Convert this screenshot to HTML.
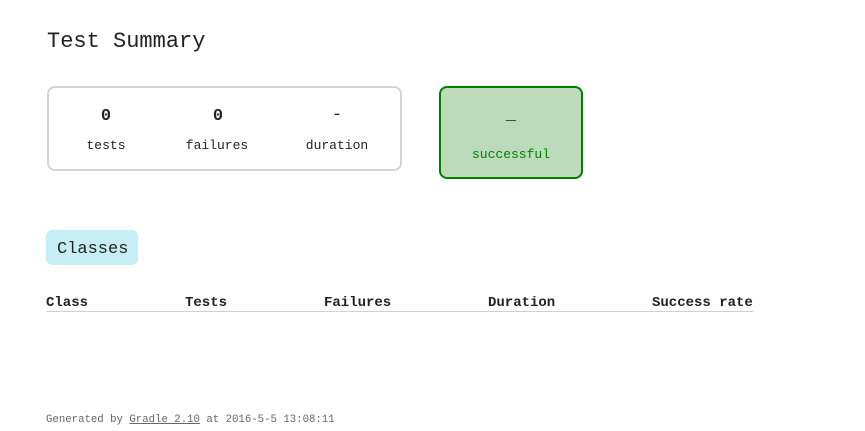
<!DOCTYPE html>
<html><head><style>
body{margin:0;width:865px;height:431px;background:#fff;font-family:"Liberation Mono","Noto Sans CJK SC",monospace;color:#222;position:relative;overflow:hidden}
.a{position:absolute;white-space:nowrap}
.c{text-align:center}
</style></head><body>
<div class="a" style="left:47px;top:28px;font-size:22px;line-height:28px;">Test Summary</div>
<div class="a" style="left:47px;top:86px;width:351px;height:81px;border:2px solid #d4d4d4;border-radius:8px;"></div>
<div class="a c" style="left:76px;top:107px;width:60px;font-size:17px;font-weight:bold;">0</div>
<div class="a c" style="left:188px;top:107px;width:60px;font-size:17px;font-weight:bold;">0</div>
<div class="a c" style="left:307px;top:106px;width:60px;font-size:17px;">-</div>
<div class="a c" style="left:76px;top:138px;width:60px;font-size:13px;">tests</div>
<div class="a c" style="left:177px;top:138px;width:80px;font-size:13px;">failures</div>
<div class="a c" style="left:297px;top:138px;width:80px;font-size:13px;">duration</div>
<div class="a" style="left:439px;top:86px;width:140px;height:89px;border:2px solid #008000;border-radius:8px;background:#bbdbbb;"></div>
<div class="a c" style="left:441px;top:106px;width:140px;font-size:17px;color:#222;">_</div>
<div class="a c" style="left:441px;top:147px;width:140px;font-size:13px;color:#008000;">successful</div>
<div class="a" style="left:46px;top:230px;width:92px;height:35px;background:#c6eff5;border-radius:6px;"></div>
<div class="a" style="left:57px;top:239px;font-size:17px;line-height:22px;">Classes</div>
<div class="a" style="left:46px;top:295px;font-size:14px;font-weight:bold;">Class</div>
<div class="a" style="left:185px;top:295px;font-size:14px;font-weight:bold;">Tests</div>
<div class="a" style="left:324px;top:295px;font-size:14px;font-weight:bold;">Failures</div>
<div class="a" style="left:488px;top:295px;font-size:14px;font-weight:bold;">Duration</div>
<div class="a" style="left:652px;top:295px;font-size:14px;font-weight:bold;">Success rate</div>
<div class="a" style="left:46px;top:311px;width:707px;height:1px;background:#d0d0d0;"></div>
<div class="a" style="left:46px;top:414px;font-size:10.7px;color:#666;">Generated by <span style="text-decoration:underline">Gradle 2.10</span> at 2016-5-5 13:08:11</div>
</body></html>
